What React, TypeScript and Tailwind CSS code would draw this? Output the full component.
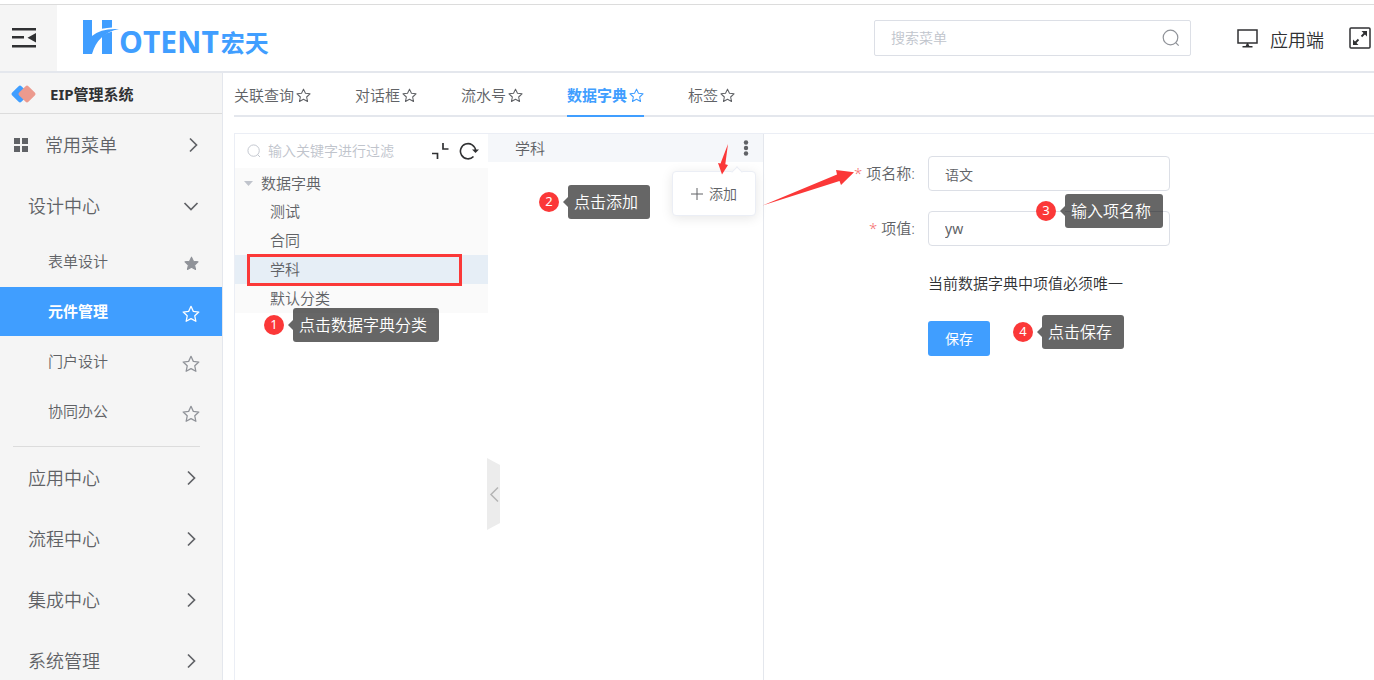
import type { ReactNode } from "react";

const topMenus = ["应用中心", "流程中心", "集成中心", "系统管理"];

const subMenus = [
  { label: "表单设计", filled: true, active: false },
  { label: "元件管理", filled: false, active: true },
  { label: "门户设计", filled: false, active: false },
  { label: "协同办公", filled: false, active: false },
];

const tabs = ["关联查询", "对话框", "流水号", "数据字典", "标签"];
const treeItems = ["测试", "合同", "学科", "默认分类"];

function Star({ className, filled = false }: { className: string; filled?: boolean }) {
  return (
    <svg
      viewBox="0 0 20 20"
      className={className}
      fill={filled ? "currentColor" : "none"}
      stroke="currentColor"
      strokeWidth="1.4"
      strokeLinejoin="round"
    >
      <path d="M10 1.5l2.6 5.6 6.1.7-4.5 4.2 1.2 6.1-5.4-3-5.4 3 1.2-6.1L1.3 7.8l6.1-.7z" />
    </svg>
  );
}

function Chevron({ down = false }: { down?: boolean }) {
  return (
    <svg viewBox="0 0 16 16" className="size-4" fill="none" stroke="#606266" strokeWidth="1.7">
      <path d={down ? "M1.5 5L8 11.5 14.5 5" : "M5 1.5L11.5 8 5 14.5"} />
    </svg>
  );
}

function SearchIcon({ className }: { className: string }) {
  return (
    <svg viewBox="0 0 18 18" className={className} fill="none" stroke="currentColor" strokeWidth="1.2">
      <circle cx="8.5" cy="8.5" r="7.3" />
      <path d="M13.7 13.7l3 3" />
    </svg>
  );
}

function Step({ n, className, children }: { n: number; className: string; children: ReactNode }) {
  return (
    <div className={`absolute z-20 flex items-center ${className}`}>
      <span className="flex size-5 items-center justify-center rounded-full bg-[#fb3838] text-[13px] font-normal text-white">
        {n}
      </span>
      <svg viewBox="0 0 5 10" className="ml-1 h-2.5 w-[5px]" fill="#666">
        <path d="M5 0v10L0 5z" />
      </svg>
      <span className="flex h-[34px] items-center rounded-[3px] bg-black/60 pr-3 pl-1.5 text-base whitespace-nowrap text-white">
        {children}
      </span>
    </div>
  );
}

function Header() {
  return (
    <header className="mt-1 flex h-[69px] shrink-0 items-stretch border-t border-b-2 border-t-[#dcdcdc] border-b-[#e4e7ed]">
      <button aria-label="收起菜单" className="flex w-[57px] items-center bg-[#f5f5f5] pl-3">
        <svg viewBox="0 0 24 22" className="h-[22px] w-6" fill="#303133">
          <path d="M0 1h24v2.600H0zM0 9h12v2.600H0zM0 18h24v2.600H0zM24 6v9.500l-8.500-4.800z" />
        </svg>
      </button>
      <a href="#" className="ml-[26px] flex items-center text-[#409eff]">
        <svg viewBox="0 0 36 36" className="h-9 w-9" fill="currentColor">
          <path d="M0 0h9v16Q18 8 36 9 15 13 9 34H0z" />
          <path d="M19 0h10v7.400Q24 7.600 19 8.800z" />
          <path d="M19 16Q23.500 12.800 29 11.400V34H19z" />
        </svg>
        <span className="pt-2 font-['Open_Sans',sans-serif] text-[30px] leading-9 font-bold">OTENT</span>
        <span className="pt-2.5 pl-0.5 text-2xl leading-9 font-bold">宏天</span>
      </a>
      <div className="ml-auto flex items-center">
        <label className="flex h-9 w-[317px] items-center rounded-xs border border-[#dcdfe6] px-4">
          <input
            aria-label="搜索菜单"
            placeholder="搜索菜单"
            className="min-w-0 flex-1 text-sm outline-none placeholder:text-[#c0c4cc]"
          />
          <SearchIcon className="-mr-1.5 size-[18px] text-[#909399]" />
        </label>
        <a href="#" className="ml-[46px] flex items-center gap-3 text-lg text-[#303133]">
          <svg viewBox="0 0 21 19" className="h-[19px] w-[21px]" fill="none" stroke="currentColor" strokeWidth="1.5">
            <path d="M1 1h19v13H1zM5.5 17.800h10" />
            <path d="M8.500 17.500L10 14h1l1.500 3.500z" fill="currentColor" stroke="none" />
          </svg>
          <span className="pt-1">应用端</span>
        </a>
        <button aria-label="全屏" className="mr-[3px] ml-[25px]">
          <svg viewBox="0 0 22 22" className="size-[22px]" fill="none" stroke="#303133" strokeWidth="1.5">
            <rect x="1" y="1" width="20" height="20" rx="1" />
            <path d="M12.500 9.500L17 5M9.500 12.500L5 17" strokeWidth="1.8" />
            <path d="M12.500 4H18v5.500zM4 12.500V18h5.500z" fill="#303133" stroke="none" />
          </svg>
        </button>
      </div>
    </header>
  );
}

function Sidebar() {
  return (
    <aside className="w-[223px] shrink-0 border-r border-[#e4e7ed] bg-[#f5f5f5] text-[#606266]">
      <div className="flex h-[41px] items-center border-b border-[#dcdcdc] pt-0.5 pl-[11px] text-[15px] font-bold text-[#303133]">
        <svg viewBox="0 0 25 18" className="mr-3.5 h-[18px] w-[25px]">
          <rect x="2.5" y="2.5" width="13" height="13" rx="2" fill="#409eff" transform="rotate(45 9 9)" />
          <rect x="9.5" y="2.5" width="13" height="13" rx="2" fill="#ec9a8e" transform="rotate(45 16 9)" />
        </svg>
        EIP管理系统
      </div>
      <nav>
        <a href="#" className="flex h-[61px] items-center pr-[21px] pl-3.5 text-lg">
          <svg viewBox="0 0 14 14" className="mr-[17px] size-3.5" fill="currentColor">
            <path d="M0 0h6v6H0zM8 0h6v6H8zM0 8h6v6H0zM8 8h6v6H8z" />
          </svg>
          <span className="flex-1">常用菜单</span>
          <Chevron />
        </a>
        <a href="#" className="flex h-[62px] items-center justify-between pr-[23px] pl-7 text-lg">
          设计中心
          <Chevron down />
        </a>
        <div className="flex flex-col gap-px">
          {subMenus.map(({ label, filled, active }) => (
            <a
              key={label}
              href="#"
              className={`flex h-[49px] items-center justify-between pr-[22px] pl-12 text-[15px] ${
                active ? "bg-[#409eff] font-bold text-white" : ""
              }`}
            >
              {label}
              <span className={`flex w-[18px] justify-center pt-1 ${active ? "text-white" : "text-[#909399]"}`}>
                <Star filled={filled} className={filled ? "size-[15px]" : "size-[18px]"} />
              </span>
            </a>
          ))}
        </div>
        <hr className="mt-2.5 mr-[22px] ml-[13px] border-[#dcdcdc]" />
        {topMenus.map((label) => (
          <a key={label} href="#" className="flex h-[61px] items-center justify-between pr-[23px] pl-7 text-lg">
            {label}
            <Chevron />
          </a>
        ))}
      </nav>
    </aside>
  );
}

function Tabs() {
  return (
    <nav className="flex h-11 shrink-0 gap-11 border-b-2 border-[#e4e7ed]">
      {tabs.map((tab) => (
        <a
          key={tab}
          href="#"
          className={`-mb-0.5 flex items-center border-b-2 pt-0.5 text-[15px] ${
            tab === "数据字典" ? "border-[#409eff] font-bold text-[#409eff]" : "border-transparent"
          }`}
        >
          {tab}
          <Star className="w-[17px] pl-0.5" />
        </a>
      ))}
    </nav>
  );
}

function TreePanel() {
  return (
    <section className="w-[253px] shrink-0">
      <div className="flex h-[34px] items-center pr-[9px] pl-3">
        <SearchIcon className="size-3.5 text-[#c0c4cc]" />
        <input
          aria-label="输入关键字进行过滤"
          placeholder="输入关键字进行过滤"
          className="ml-[7px] min-w-0 flex-1 text-sm outline-none placeholder:text-[#c0c4cc]"
        />
        <button aria-label="折叠" className="mr-2.5">
          <svg viewBox="0 0 18 18" className="size-[18px]" fill="none" stroke="#303133" strokeWidth="1.7">
            <path d="M12 1v6h5.500M1 11.500h5.500V17" />
          </svg>
        </button>
        <button aria-label="刷新">
          <svg viewBox="0 0 20 18" className="h-[18px] w-5" fill="none" stroke="#303133" strokeWidth="1.6">
            <path d="M14.500 14.500A7.600 7.600 0 1 1 16.600 8.500" />
            <path d="M13 7.500l3.500 3.500L20 7.500z" fill="#303133" stroke="none" />
          </svg>
        </button>
      </div>
      <ul className="bg-[#fafafa] text-[15px]">
        <li className="flex h-[29px] items-center pt-px pl-[9px]">
          <svg viewBox="0 0 9 5" className="mr-2 h-[5px] w-[9px]" fill="#c0c4cc">
            <path d="M0 0h9L4.500 5z" />
          </svg>
          数据字典
        </li>
        {treeItems.map((item) => (
          <li
            key={item}
            className={`relative flex h-[29px] items-center pl-[35px] ${item === "学科" ? "bg-[#e6eef6]" : ""}`}
          >
            {item}
            {item === "学科" && (
              <span className="absolute -top-px left-3 h-8 w-[215px] border-3 border-[#fb3838]" />
            )}
          </li>
        ))}
      </ul>
    </section>
  );
}

function ItemPanel() {
  return (
    <section className="relative w-[276px] shrink-0 border-r border-[#e4e7ed]">
      <div className="flex h-7 items-center justify-between bg-[#f5f7fa] pr-3.5 pl-[27px] text-[15px]">
        学科
        <button aria-label="更多">
          <svg viewBox="0 0 6 16" className="h-4 w-1.5" fill="#606266">
            <circle cx="3" cy="2.5" r="2.2" />
            <circle cx="3" cy="8" r="2.2" />
            <circle cx="3" cy="13.5" r="2.2" />
          </svg>
        </button>
      </div>
      <div className="absolute top-[37px] right-[7px] rounded border border-[#ebeef5] bg-white shadow-[0_2px_12px_rgba(0,0,0,0.1)]">
        <span className="absolute -top-1 right-3.5 size-2 rotate-45 border-t border-l border-[#ebeef5] bg-white" />
        <button className="flex h-[43px] w-[82px] items-center justify-center gap-1.5 text-sm">
          <svg viewBox="0 0 12 12" className="size-3" fill="none" stroke="currentColor">
            <path d="M0 6h12M6 0v12" />
          </svg>
          添加
        </button>
      </div>
      <button aria-label="收起" className="absolute top-[324px] -left-px">
        <svg viewBox="0 0 13 72" className="h-[72px] w-[13px]">
          <path d="M0 0l13 7v58L0 72z" fill="#ececec" />
          <path d="M11 29.500l-7 7 7 7" fill="none" stroke="#b4b4b4" strokeWidth="1.5" />
        </svg>
      </button>
    </section>
  );
}

function ItemForm() {
  return (
    <form className="grid flex-1 auto-rows-min grid-cols-[151px_242px] gap-x-[13px] gap-y-5 pt-[22px] text-[15px]">
      <label htmlFor="item-name" className="flex items-center justify-end gap-1">
        <span className="text-[#f56c6c]">*</span>项名称:
      </label>
      <input
        id="item-name"
        defaultValue="语文"
        className="h-[35px] rounded border border-[#dcdfe6] px-4 text-sm outline-none"
      />
      <label htmlFor="item-value" className="flex items-center justify-end gap-1">
        <span className="text-[#f56c6c]">*</span>项值:
      </label>
      <input
        id="item-value"
        defaultValue="yw"
        className="h-[35px] rounded border border-[#dcdfe6] px-4 text-sm font-normal outline-none"
      />
      <p className="col-start-2 h-[35px] leading-[35px] text-[#303133]">当前数据字典中项值必须唯一</p>
      <button
        type="button"
        className="col-start-2 h-[35px] w-[62px] rounded-[3px] bg-[#409eff] text-sm font-normal text-white"
      >
        保存
      </button>
    </form>
  );
}

function Guide() {
  return (
    <>
      <Step n={1} className="top-[308px] left-[264px]">点击数据字典分类</Step>
      <Step n={2} className="top-[185px] left-[539px]">点击添加</Step>
      <Step n={3} className="top-[194px] left-[1036px]">输入项名称</Step>
      <Step n={4} className="top-[315px] left-[1013px]">点击保存</Step>
      <svg
        viewBox="0 0 140 66"
        className="pointer-events-none absolute top-[142px] left-[716px] z-10 h-[66px] w-[140px]"
        fill="#fb3838"
      >
        <path d="M12 2L4.500 21.500l-2.500-.5 4 11.500L12 23l-2.700-.7z" />
        <path d="M46.500 63.500L121 32.500l-1-4.500 18 2.300L125 43l-1.500-4z" />
      </svg>
    </>
  );
}

export default function App() {
  return (
    <div className="relative flex h-screen flex-col overflow-hidden bg-white font-['Noto_Sans','Noto_Sans_CJK_SC',sans-serif] font-[350] text-[#606266]">
      <Header />
      <div className="flex min-h-0 flex-1">
        <Sidebar />
        <main className="flex min-w-0 flex-1 flex-col pl-[11px]">
          <Tabs />
          <div className="mt-4 flex min-h-0 flex-1 border-t border-l border-[#ebeef5]">
            <TreePanel />
            <ItemPanel />
            <ItemForm />
          </div>
        </main>
      </div>
      <Guide />
    </div>
  );
}
